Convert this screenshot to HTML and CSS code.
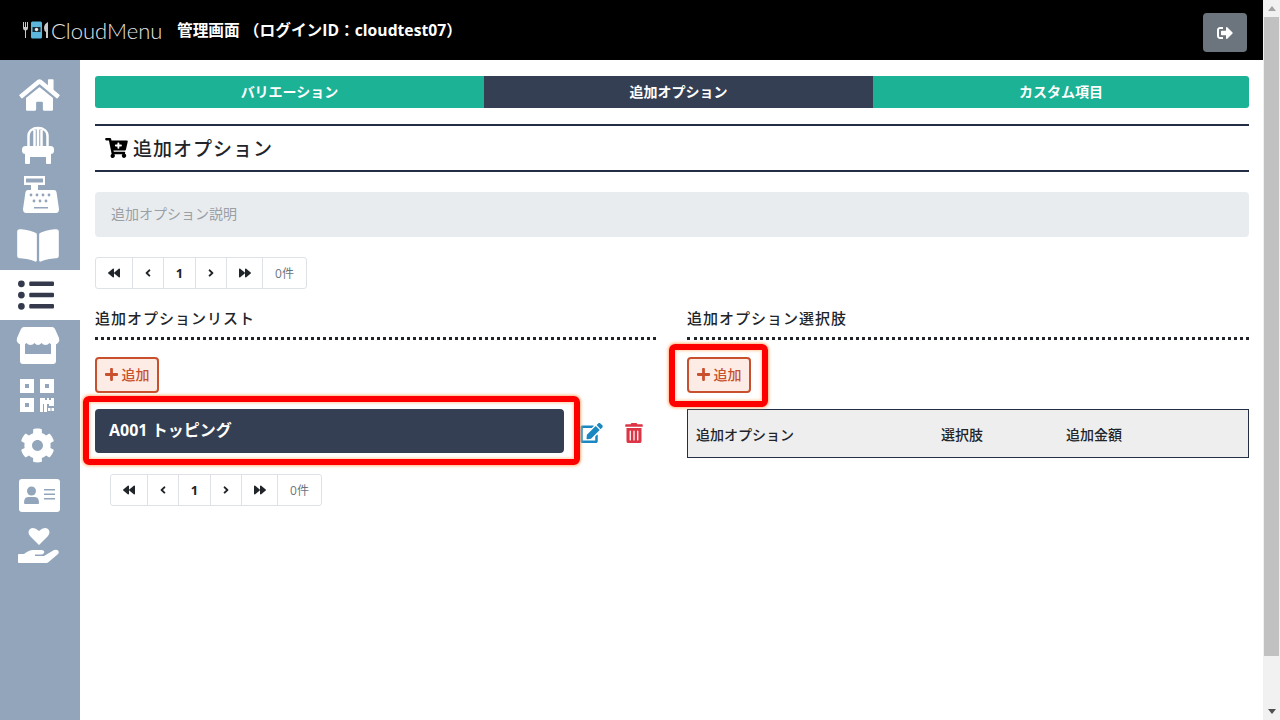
FILE: index.html
```html
<!DOCTYPE html>
<html lang="ja">
<head>
  <meta charset="UTF-8" />
  <title>CloudMenu 管理画面</title>
  <link rel="stylesheet" href="styles.css">
</head>
<body>

  <div class="page">
    <header class="topbar">
      <div class="logo">
        <svg class="logo-mark" viewBox="0 0 30 18" width="30" height="18">
          <path fill="#c9c9c9" d="M1 1h1v5h1V1h1v5h1V1h1v6q0 2-2 2.500V17H3V9.500Q1 9 1 7z"/>
          <rect x="9" y="0.500" width="11" height="17" rx="1.500" fill="#5db7dc"/>
          <rect x="10.500" y="6" width="8" height="5" fill="#1c2a33"/>
          <circle cx="14.500" cy="8.500" r="1.700" fill="#e8e8e8"/>
          <path fill="#c9c9c9" d="M26 1v16h-2v-6q-2-1-2-4 0-4 4-6z"/>
        </svg>
        <span class="logo-text">CloudMenu</span>
      </div>
      <div class="admin-title">管理画面 （ログインID：cloudtest07）</div>
      <button class="logout">
        <svg viewBox="0 0 512 512" width="16" height="16"><path fill="#fff" d="M497 273L329 441c-15 15-41 4.500-41-17v-96H152c-13.300 0-24-10.700-24-24v-96c0-13.300 10.700-24 24-24h136V88c0-21.400 25.900-32 41-17l168 168c9.300 9.400 9.300 24.600 0 34zM192 436v-40c0-6.600-5.400-12-12-12H96c-17.700 0-32-14.300-32-32V160c0-17.700 14.300-32 32-32h84c6.600 0 12-5.400 12-12V76c0-6.600-5.400-12-12-12H96c-53 0-96 43-96 96v192c0 53 43 96 96 96h84c6.600 0 12-5.400 12-12z"/></svg>
      </button>
    </header>

    <div class="body-row">
      <nav class="sidebar">
        <a class="nav-item">
          <svg class="ic-home" viewBox="0 0 576 512" width="41" height="36"><path d="M280.370 148.260L96 300.110V464a16 16 0 0 0 16 16l112.060-.29a16 16 0 0 0 15.920-16V368a16 16 0 0 1 16-16h64a16 16 0 0 1 16 16v95.640a16 16 0 0 0 16 16.050L464 480a16 16 0 0 0 16-16V300L295.670 148.260a12.190 12.190 0 0 0-15.300 0zM571.600 251.470L488 182.560V44.050a12 12 0 0 0-12-12h-56a12 12 0 0 0-12 12v72.610L318.470 43a48 48 0 0 0-61 0L4.340 251.470a12 12 0 0 0-1.600 16.900l25.500 31A12 12 0 0 0 45.150 301l235.220-193.740a12.190 12.190 0 0 1 15.300 0L530.900 301a12 12 0 0 0 16.900-1.600l25.500-31a12 12 0 0 0-1.700-16.930z"/></svg>
        </a>
        <a class="nav-item">
          <svg viewBox="0 0 32 38" width="32" height="38"><path class="chair-back" d="M6.500 21V10C6.500 5 10.500 2 16 2s9.500 3 9.500 8v11M12.500 4v17M16 3v18M19.500 4v17"/><rect x="0" y="20" width="32" height="8" rx="3.500"/><rect x="3" y="26" width="5" height="12" rx="1"/><rect x="24" y="26" width="5" height="12" rx="1"/><rect x="6" y="27" width="20" height="4"/></svg>
        </a>
        <a class="nav-item">
          <svg class="ic-register" viewBox="0 0 36 38" width="36" height="38"><path fill-rule="evenodd" d="M1 0h21v9h-7v5H8V9H1zM3 2.500v4h17v-4z"/><path d="M5 14h26q2 0 2.500 2l2.500 17q0 4-3 4H3q-3 0-3-4L2.500 16Q3 14 5 14z"/><g class="holes"><circle cx="8" cy="19" r="1.400"/><circle cx="14" cy="19" r="1.400"/><circle cx="20" cy="19" r="1.400"/><circle cx="26" cy="19" r="1.400"/><circle cx="11" cy="25" r="1.400"/><circle cx="17" cy="25" r="1.400"/><circle cx="23" cy="25" r="1.400"/><rect x="11" y="31" width="14" height="1.500"/></g></svg>
        </a>
        <a class="nav-item">
          <svg viewBox="0 0 576 512" width="42" height="37"><path d="M542.220 32.050c-54.800 3.110-163.720 14.430-230.960 55.590-4.640 2.840-7.270 7.890-7.270 13.170v363.870c0 11.550 12.630 18.850 23.280 13.490 69.180-34.820 169.230-44.320 218.700-46.920 16.890-.89 30.020-14.430 30.020-30.660V62.750c.01-17.710-15.350-31.740-33.770-30.700zM264.730 87.640C197.500 46.480 88.580 35.170 33.780 32.050 15.360 31.010 0 45.040 0 62.750V400.600c0 16.240 13.130 29.780 30.020 30.660 49.490 2.600 149.590 12.110 218.770 46.950 10.620 5.350 23.210-1.940 23.210-13.460V100.630c0-5.290-2.620-10.140-7.270-12.990z"/></svg>
        </a>
        <a class="nav-item active">
          <svg class="ic-list" viewBox="0 0 512 512" width="36" height="36"><path d="M48 48a48 48 0 1 0 48 48 48 48 0 0 0-48-48zm0 160a48 48 0 1 0 48 48 48 48 0 0 0-48-48zm0 160a48 48 0 1 0 48 48 48 48 0 0 0-48-48zm448 16H176a16 16 0 0 0-16 16v32a16 16 0 0 0 16 16h320a16 16 0 0 0 16-16v-32a16 16 0 0 0-16-16zm0-320H176a16 16 0 0 0-16 16v32a16 16 0 0 0 16 16h320a16 16 0 0 0 16-16V80a16 16 0 0 0-16-16zm0 160H176a16 16 0 0 0-16 16v32a16 16 0 0 0 16 16h320a16 16 0 0 0 16-16v-32a16 16 0 0 0-16-16z"/></svg>
        </a>
        <a class="nav-item">
          <svg viewBox="0 0 44 37" width="44" height="37"><path d="M8 0h28q2 0 3 2l4 9q1 3-1 5-2 2-4.500 2-2.500 0-4-2-1.500 2-4 2t-4-2q-1.500 2-3.500 2t-3.500-2q-1.500 2-4 2t-4-2q-1.500 2-4 2T2 16q-2-2-1-5l4-9q1-2 3-2z"/><path d="M4 16h5v11h26V16h5v18q0 3-3 3H7q-3 0-3-3z"/></svg>
        </a>
        <a class="nav-item">
          <svg class="ic-qr" viewBox="0 0 34 33" width="34" height="33"><path fill-rule="evenodd" d="M0 0h14v14H0zM5 5v4h4V5zM20 0h14v14H20zM25 5v4h4V5zM0 19h14v14H0zM5 24v4h4v-4z"/><path d="M20 19h5v2h2v-2h2v2h2v-2h3v8h-5v-2h-2v8h-3v-8h-1v8h-3z"/><rect x="28" y="29" width="2.500" height="3"/><rect x="31.500" y="29" width="2.500" height="3"/></svg>
        </a>
        <a class="nav-item">
          <svg class="ic-gear" viewBox="0 0 512 512" width="35" height="35"><path d="M487.400 315.700l-42.600-24.600c4.300-23.200 4.300-47 0-70.200l42.600-24.600c4.900-2.800 7.100-8.600 5.500-14-11.100-35.600-30-67.800-54.700-94.600-3.800-4.100-10-5.100-14.800-2.300L380.800 110c-17.900-15.400-38.500-27.300-60.800-35.100V25.800c0-5.600-3.900-10.500-9.400-11.700-36.700-8.200-74.300-7.800-109.200 0-5.500 1.200-9.400 6.100-9.400 11.700V75c-22.200 7.900-42.800 19.800-60.800 35.100L88.700 85.500c-4.900-2.800-11-1.900-14.800 2.300-24.700 26.700-43.600 58.900-54.700 94.600-1.700 5.400.6 11.200 5.500 14L67.300 221c-4.300 23.200-4.300 47 0 70.200l-42.600 24.600c-4.900 2.800-7.100 8.600-5.500 14 11.100 35.600 30 67.800 54.700 94.600 3.800 4.100 10 5.100 14.800 2.300l42.600-24.600c17.900 15.400 38.500 27.300 60.800 35.100v49.200c0 5.600 3.900 10.500 9.400 11.700 36.700 8.200 74.300 7.800 109.200 0 5.500-1.200 9.400-6.100 9.400-11.700v-49.200c22.200-7.900 42.800-19.800 60.800-35.100l42.600 24.600c4.900 2.800 11 1.900 14.800-2.300 24.700-26.700 43.600-58.900 54.700-94.600 1.500-5.500-.7-11.300-5.600-14.100zM256 336c-44.100 0-80-35.900-80-80s35.900-80 80-80 80 35.900 80 80-35.900 80-80 80z"/></svg>
        </a>
        <a class="nav-item">
          <svg class="ic-id" viewBox="0 0 41 33" width="41" height="33"><rect width="41" height="33" rx="3"/><g class="holes"><circle cx="12.500" cy="12" r="4.500"/><path d="M5 24q0-6 4-6h7q4 0 4 6 0 1-1 1H6q-1 0-1-1z"/><rect x="25" y="10" width="11" height="1.500"/><rect x="25" y="14.500" width="11" height="1.500"/><rect x="25" y="19" width="11" height="1.500"/></g></svg>
        </a>
        <a class="nav-item">
          <svg class="ic-hand" viewBox="0 0 42 37" width="42" height="37"><path d="M21 18L12 9Q9 5 12 2q4-2.500 9 2 5-4.500 9-2 3 3 0 7z"/><path d="M0 28q0-1 1-1h5q5-4 9-4h9q3 .5 2 3-1 1.500-3 1.500h-6V29h9l10-6q3-1 4.500 1 1 2-1 3.500L30 35.500q-1 .5-3 .5H1q-1 0-1-1z"/></svg>
        </a>
      </nav>

      <main class="content">
        <div class="tabs">
          <a class="tab">バリエーション</a>
          <a class="tab current">追加オプション</a>
          <a class="tab">カスタム項目</a>
        </div>

        <h1 class="page-title">
          <svg viewBox="0 0 576 512" width="23" height="20"><path d="M504.717 320H211.572l6.545 32h268.418c15.401 0 26.816 14.301 23.403 29.319l-5.517 24.276C523.112 414.668 536 433.828 536 456c0 31.202-25.519 56.444-56.824 55.994-29.823-.429-54.350-24.631-55.155-54.447-.44-16.287 6.085-31.049 16.803-41.548H231.176C241.553 426.165 248 440.326 248 456c0 31.813-26.528 57.431-58.670 55.938-28.540-1.325-51.751-24.385-53.251-52.917-1.158-22.034 10.436-41.455 28.051-51.586L93.883 64H24C10.745 64 0 53.255 0 40V24C0 10.745 10.745 0 24 0h102.529c11.401 0 21.228 8.021 23.513 19.190L159.208 64H551.990c15.401 0 26.816 14.301 23.403 29.319l-47.273 208C525.637 312.246 515.923 320 504.717 320zM408 168h-48v-40c0-8.837-7.163-16-16-16h-16c-8.837 0-16 7.163-16 16v40h-48c-8.837 0-16 7.163-16 16v16c0 8.837 7.163 16 16 16h48v40c0 8.837 7.163 16 16 16h16c8.837 0 16-7.163 16-16v-40h48c8.837 0 16-7.163 16-16v-16c0-8.837-7.163-16-16-16z"/></svg>
          追加オプション
        </h1>

        <div class="description">追加オプション説明</div>

        <ul class="pager">
          <li><svg viewBox="0 0 512 512" width="12" height="12"><path d="M11.500 280.600l192 160c20.600 17.200 52.500 2.800 52.500-24.600V96c0-27.400-31.900-41.800-52.500-24.600l-192 160c-15.300 12.800-15.300 36.400 0 49.200zm256 0l192 160c20.600 17.200 52.500 2.800 52.500-24.600V96c0-27.400-31.900-41.800-52.500-24.600l-192 160c-15.300 12.800-15.300 36.400 0 49.200z"/></svg></li>
          <li><svg viewBox="0 0 256 512" width="6" height="12"><path d="M31.700 239l136-136c9.400-9.400 24.600-9.400 33.900 0l22.600 22.600c9.400 9.400 9.400 24.600 0 33.900L127.900 256l96.400 96.400c9.400 9.400 9.400 24.600 0 33.900L201.700 409c-9.400 9.400-24.600 9.400-33.900 0l-136-136c-9.500-9.400-9.500-24.600-.1-34z"/></svg></li>
          <li class="num">1</li>
          <li><svg viewBox="0 0 256 512" width="6" height="12"><path d="M224.300 273l-136 136c-9.400 9.400-24.600 9.400-33.900 0l-22.600-22.600c-9.400-9.400-9.400-24.600 0-33.900l96.400-96.400-96.400-96.400c-9.400-9.400-9.400-24.600 0-33.900L54.300 103c9.400-9.400 24.600-9.400 33.900 0l136 136c9.500 9.400 9.500 24.600.1 34z"/></svg></li>
          <li><svg viewBox="0 0 512 512" width="12" height="12"><path d="M500.500 231.400l-192-160C287.900 54.300 256 68.600 256 96v320c0 27.400 31.900 41.800 52.500 24.600l192-160c15.300-12.800 15.300-36.400 0-49.200zm-256 0l-192-160C31.900 54.300 0 68.600 0 96v320c0 27.400 31.900 41.800 52.500 24.600l192-160c15.300-12.800 15.300-36.400 0-49.200z"/></svg></li>
          <li class="count">0件</li>
        </ul>

        <div class="columns">
          <section class="col col-left">
            <h2 class="col-title">追加オプションリスト</h2>
            <button class="add-btn">
              <svg viewBox="0 0 448 512" width="13" height="15"><path d="M416 208H272V64c0-17.670-14.330-32-32-32h-32c-17.670 0-32 14.330-32 32v144H32c-17.670 0-32 14.330-32 32v32c0 17.670 14.330 32 32 32h144v144c0 17.670 14.330 32 32 32h32c17.670 0 32-14.330 32-32V304h144c17.670 0 32-14.330 32-32v-32c0-17.670-14.330-32-32-32z"/></svg>
              追加
            </button>
            <div class="item-row">
              <div class="item">
                A001 トッピング
                <span class="mark mark-item"></span>
              </div>
              <svg class="edit-icon" viewBox="0 0 576 512" width="23" height="20"><path d="M402.600 83.200l90.200 90.200c3.800 3.800 3.800 10 0 13.800L274.400 405.600l-92.800 10.300c-12.400 1.400-22.900-9.100-21.500-21.500l10.300-92.800L388.800 83.200c3.800-3.800 10-3.800 13.800 0zm162-22.900l-48.800-48.800c-15.200-15.200-39.900-15.200-55.200 0l-35.400 35.400c-3.800 3.800-3.800 10 0 13.800l90.200 90.200c3.800 3.800 10 3.800 13.800 0l35.400-35.400c15.200-15.300 15.200-40 0-55.200zM384 346.200V448H64V128h229.800c3.200 0 6.200-1.300 8.500-3.500l40-40c7.600-7.600 2.200-20.500-8.500-20.500H48C21.500 64 0 85.500 0 112v352c0 26.500 21.500 48 48 48h352c26.500 0 48-21.500 48-48V306.200c0-10.700-12.900-16-20.500-8.500l-40 40c-2.200 2.300-3.500 5.300-3.500 8.500z"/></svg>
              <svg class="trash-icon" viewBox="0 0 448 512" width="18" height="20"><path d="M32 464a48 48 0 0 0 48 48h288a48 48 0 0 0 48-48V128H32zm272-256a16 16 0 0 1 32 0v224a16 16 0 0 1-32 0zm-96 0a16 16 0 0 1 32 0v224a16 16 0 0 1-32 0zm-96 0a16 16 0 0 1 32 0v224a16 16 0 0 1-32 0zM432 32H312l-9.400-18.700A24 24 0 0 0 281.100 0H166.800a23.720 23.720 0 0 0-21.400 13.300L136 32H16A16 16 0 0 0 0 48v32a16 16 0 0 0 16 16h416a16 16 0 0 0 16-16V48a16 16 0 0 0-16-16z"/></svg>
            </div>
            <ul class="pager pager-list">
              <li><svg viewBox="0 0 512 512" width="12" height="12"><path d="M11.500 280.600l192 160c20.600 17.200 52.500 2.800 52.500-24.600V96c0-27.400-31.900-41.800-52.500-24.600l-192 160c-15.300 12.800-15.300 36.400 0 49.200zm256 0l192 160c20.600 17.200 52.500 2.800 52.500-24.600V96c0-27.400-31.900-41.800-52.500-24.600l-192 160c-15.300 12.800-15.300 36.400 0 49.200z"/></svg></li>
              <li><svg viewBox="0 0 256 512" width="6" height="12"><path d="M31.700 239l136-136c9.400-9.400 24.600-9.400 33.900 0l22.600 22.600c9.400 9.400 9.400 24.600 0 33.900L127.900 256l96.400 96.400c9.400 9.400 9.400 24.600 0 33.900L201.700 409c-9.400 9.400-24.600 9.400-33.900 0l-136-136c-9.500-9.400-9.500-24.600-.1-34z"/></svg></li>
              <li class="num">1</li>
              <li><svg viewBox="0 0 256 512" width="6" height="12"><path d="M224.300 273l-136 136c-9.400 9.400-24.600 9.400-33.900 0l-22.600-22.600c-9.400-9.400-9.400-24.600 0-33.900l96.400-96.400-96.400-96.400c-9.400-9.400-9.400-24.600 0-33.900L54.300 103c9.400-9.400 24.600-9.400 33.900 0l136 136c9.500 9.400 9.500 24.600.1 34z"/></svg></li>
              <li><svg viewBox="0 0 512 512" width="12" height="12"><path d="M500.500 231.400l-192-160C287.900 54.300 256 68.600 256 96v320c0 27.400 31.900 41.800 52.500 24.600l192-160c15.300-12.800 15.300-36.400 0-49.200zm-256 0l-192-160C31.900 54.300 0 68.600 0 96v320c0 27.400 31.900 41.800 52.500 24.600l192-160c15.300-12.800 15.300-36.400 0-49.200z"/></svg></li>
              <li class="count">0件</li>
            </ul>
          </section>

          <section class="col">
            <h2 class="col-title">追加オプション選択肢</h2>
            <button class="add-btn">
              <svg viewBox="0 0 448 512" width="13" height="15"><path d="M416 208H272V64c0-17.670-14.330-32-32-32h-32c-17.670 0-32 14.330-32 32v144H32c-17.670 0-32 14.330-32 32v32c0 17.670 14.330 32 32 32h144v144c0 17.670 14.330 32 32 32h32c17.670 0 32-14.330 32-32V304h144c17.670 0 32-14.330 32-32v-32c0-17.670-14.330-32-32-32z"/></svg>
              追加
              <span class="mark mark-add"></span>
            </button>
            <div class="choice-head">
              <span class="c-name">追加オプション</span>
              <span class="c-choice">選択肢</span>
              <span>追加金額</span>
            </div>
          </section>
        </div>
      </main>

    </div>
  </div>

  <div class="scrollbar">
    <span class="arrow up"></span>
    <span class="thumb"></span>
    <span class="arrow down"></span>
  </div>

</body>
</html>
```

FILE: styles.css
```css
* {
  box-sizing: border-box;
}

html, body {
  height: 100%;
}

body {
  margin: 0;
  display: flex;
  overflow: hidden;
  background: #fff;
  color: #212529;
  font-family: 'Open Sans', 'Noto Sans CJK JP', sans-serif;
  font-size: 14px;
}

.page {
  flex: 1;
  min-width: 0;
  display: flex;
  flex-direction: column;
}

/* top bar */
.topbar {
  height: 60px;
  flex: none;
  background: #000;
  display: flex;
  align-items: center;
  padding: 0 16px 0 22px;
}

.logo {
  display: flex;
  align-items: center;
  width: 155px;
}

.logo-mark {
  flex: none;
}

.logo-text {
  color: #e4e4e4;
  font-family: 'Lato', sans-serif;
  font-weight: 300;
  font-size: 22px;
  margin-left: -1px;
}

.admin-title {
  color: #fff;
  font-weight: 700;
  font-size: 15.7px;
  flex: 1;
  padding-bottom: 2px;
}

.logout {
  width: 44px;
  height: 39px;
  margin-top: 5px;
  border: none;
  border-radius: 4px;
  background: #6c757d;
  display: flex;
  align-items: center;
  justify-content: center;
  padding: 0;
}

/* side menu */
.body-row {
  flex: 1;
  display: flex;
  min-height: 0;
}

.sidebar {
  width: 80px;
  flex: none;
  background: #92a5bb;
  padding-top: 10px;
}

.nav-item {
  height: 50px;
  display: flex;
  align-items: center;
  justify-content: center;
  padding-right: 4px;
}

.nav-item svg {
  fill: #fff;
}

.nav-item .holes {
  fill: #92a5bb;
}

.nav-item .chair-back {
  fill: none;
  stroke: #fff;
  stroke-width: 2.500;
}

.nav-item.active {
  background: #fff;
}

.nav-item.active svg {
  fill: #343a4c;
}

.ic-home { margin-left: 3px; }
.ic-register { margin-left: 6px; }
.ic-list { margin-right: 4px; }
.ic-qr { margin-right: 3px; }
.ic-gear { margin-right: 2px; }
.ic-id { margin-left: 3px; }
.ic-hand { margin-left: 2px; }

/* main area */
.content {
  flex: 1;
  min-width: 0;
  padding: 16px 14px 0 15px;
}

.tabs {
  display: grid;
  grid-template-columns: 389px 389px 1fr;
  height: 32px;
  border-radius: 3px;
  overflow: hidden;
}

.tab {
  display: flex;
  align-items: center;
  justify-content: center;
  padding-bottom: 3px;
  background: #1cb296;
  color: #fff;
  font-weight: 700;
  font-size: 14px;
}

.tab.current {
  background: #343f53;
}

.page-title {
  margin: 16px 0 0;
  height: 48px;
  border-top: 2px solid #232e45;
  border-bottom: 2px solid #232e45;
  display: flex;
  align-items: center;
  gap: 5px;
  padding-left: 10px;
  font-size: 19px;
  font-weight: 500;
  letter-spacing: 1px;
}

.description {
  margin-top: 20px;
  height: 45px;
  background: #e9ecef;
  border-radius: 4px;
  color: #9a9fa5;
  font-size: 14px;
  padding: 0 16px 3px;
  display: flex;
  align-items: center;
}

.pager {
  list-style: none;
  margin: 20px 0 0;
  padding: 0;
  display: inline-flex;
  height: 32px;
  border: 1px solid #dee2e6;
  border-radius: 3px;
  vertical-align: top;
}

.pager li {
  width: 31px;
  display: flex;
  align-items: center;
  justify-content: center;
  border-left: 1px solid #dee2e6;
  font-size: 13px;
}

.pager li:first-child {
  border-left: none;
  width: 36px;
}

.pager li:nth-child(3) {
  width: 32px;
}

.pager li:nth-child(5) {
  width: 36px;
}

.pager li.num {
  font-weight: 700;
}

.pager li.count {
  width: 44px;
  color: #6c757d;
  font-size: 12px;
}

.pager svg {
  fill: #212529;
}

.columns {
  display: flex;
  gap: 31px;
}

.col {
  flex: 1;
  min-width: 0;
}

.col-left {
  flex: none;
  width: 561px;
}

.col-title {
  margin: 17px 0 0;
  height: 34px;
  border-bottom: 3px dotted #212529;
  font-size: 15px;
  font-weight: 500;
  line-height: 24px;
  letter-spacing: 1px;
}

.add-btn {
  position: relative;
  display: flex;
  align-items: center;
  justify-content: center;
  gap: 4px;
  margin-top: 17px;
  width: 64px;
  height: 36px;
  padding: 0 0 2px;
  background: #fdece5;
  border: 2px solid #c9502d;
  border-radius: 4px;
  color: #c9502d;
  font-family: inherit;
  font-size: 14px;
  font-weight: 500;
}

.add-btn svg {
  fill: #c9502d;
}

.item-row {
  display: flex;
  align-items: center;
  margin-top: 16px;
}

.item {
  position: relative;
  width: 469px;
  height: 44px;
  background: #343f53;
  border-radius: 4px;
  color: #fff;
  font-weight: 700;
  font-size: 16px;
  padding-left: 14px;
  padding-bottom: 4px;
  display: flex;
  align-items: center;
}

/* red callouts drawn over the screen */
.mark {
  position: absolute;
  border: 6px solid #f00;
  border-radius: 6px;
  box-shadow: 0 0 3px 1px #ffb27a, inset 0 0 3px 1px #ffd0a8;
}

.mark-item {
  inset: -13px -16px -12px -12px;
}

.mark-add {
  inset: -15px -19px -16px -20px;
}

.edit-icon {
  fill: #1a87c0;
  margin: 4px 0 0 16px;
}

.trash-icon {
  fill: #dc3545;
  margin: 4px 0 0 22px;
}

.pager-list {
  margin: 21px 0 0 15px;
}

.choice-head {
  margin-top: 16px;
  height: 49px;
  background: #eee;
  border: 1px solid #232e45;
  display: flex;
  align-items: center;
  padding-left: 8px;
  font-weight: 500;
  font-size: 14px;
}

.c-name {
  width: 245px;
}

.c-choice {
  width: 125px;
}

/* window scrollbar */
.scrollbar {
  width: 17px;
  flex: none;
  background: #f1f1f1;
  display: flex;
  flex-direction: column;
  align-items: center;
}

.thumb {
  width: 15px;
  flex: 1;
  background: #c1c1c1;
  margin-bottom: 53px;
}

.arrow {
  flex: none;
  width: 0;
  height: 0;
  border-left: 4px solid transparent;
  border-right: 4px solid transparent;
}

.arrow.up {
  margin: 6px 0;
  border-bottom: 5px solid #a3a3a3;
}

.arrow.down {
  margin: 0 0 6px;
  border-top: 5px solid #505050;
}
```
